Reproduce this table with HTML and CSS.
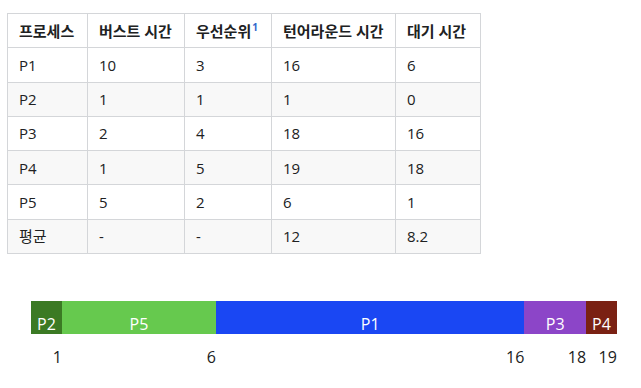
FILE: index.html
```html
<!DOCTYPE html>
<html lang="ko">
<head>
<meta charset="utf-8">
<link rel="stylesheet" href="styles.css">
</head>
<body>
<div class="page">
  <table class="proc">
    <colgroup>
      <col class="c1"><col class="c2"><col class="c3"><col class="c4"><col class="c5">
    </colgroup>
    <thead>
      <tr><th>프로세스</th><th>버스트 시간</th><th>우선순위<sup class="ref">1</sup></th><th>턴어라운드 시간</th><th>대기 시간</th></tr>
    </thead>
    <tbody>
      <tr><td>P1</td><td>10</td><td>3</td><td>16</td><td>6</td></tr>
      <tr><td>P2</td><td>1</td><td>1</td><td>1</td><td>0</td></tr>
      <tr><td>P3</td><td>2</td><td>4</td><td>18</td><td>16</td></tr>
      <tr><td>P4</td><td>1</td><td>5</td><td>19</td><td>18</td></tr>
      <tr><td>P5</td><td>5</td><td>2</td><td>6</td><td>1</td></tr>
      <tr><td>평균</td><td>-</td><td>-</td><td>12</td><td>8.2</td></tr>
    </tbody>
  </table>

  <div class="gantt">
    <div class="bar">
      <div class="seg p2" style="width:30.84px"><span>P2</span></div>
      <div class="seg p5" style="width:154.2px"><span>P5</span></div>
      <div class="seg p1" style="width:308.4px"><span>P1</span></div>
      <div class="seg p3" style="width:61.68px"><span>P3</span></div>
      <div class="seg p4" style="width:30.84px"><span>P4</span></div>
    </div>
    <div class="ticks">
      <div class="tick" style="width:30.84px">1</div>
      <div class="tick" style="width:154.2px">6</div>
      <div class="tick" style="width:308.4px">16</div>
      <div class="tick" style="width:61.68px">18</div>
      <div class="tick" style="width:30.84px">19</div>
    </div>
  </div>
</div>
</body>
</html>
```
FILE: styles.css
```css
html, body {
  margin: 0;
  padding: 0;
  background: #fff;
}
body {
  font-family: "Open Sans", "Noto Sans CJK KR", sans-serif;
  font-size: 15px;
  color: #202122;
}
.page {
  padding: 13px 0 0 7px;
}
.proc {
  border-collapse: collapse;
  table-layout: fixed;
  width: 473px;
  border: 1px solid #c8ccd1;
}
.c1 { width: 80px; }
.c2 { width: 97px; }
.c3 { width: 87px; }
.c4 { width: 124px; }
.c5 { width: 85px; }
.proc th, .proc td {
  border: 1px solid #d4d6d9;
  padding: 6.64px 11px;
  line-height: 20px;
  text-align: left;
  white-space: nowrap;
}
.proc th {
  font-weight: bold;
  background: #fff;
}
.proc tbody tr:nth-child(even) td {
  background: #f8f8f8;
}
.ref {
  color: #3366cc;
  font-size: 10px;
  line-height: 0;
  vertical-align: 6px;
  margin-left: 1px;
}
.gantt {
  margin: 47px 0 0 24px;
  width: 586px;
}
.bar {
  display: flex;
  height: 33px;
}
.seg {
  display: flex;
  align-items: flex-end;
  justify-content: center;
  padding-bottom: 2px;
  box-sizing: border-box;
  color: #fff;
  font-size: 16px;
  line-height: 16px;
}
.p2 { background: #3b7a24; }
.p5 { background: #66c94e; }
.p1 { background: #1a47f3; }
.p3 { background: #8c45c8; }
.p4 { background: #7a2113; }
.ticks {
  display: flex;
  margin-top: 15px;
}
.tick {
  text-align: right;
  font-size: 16px;
  line-height: 16px;
  color: #202122;
}
```
